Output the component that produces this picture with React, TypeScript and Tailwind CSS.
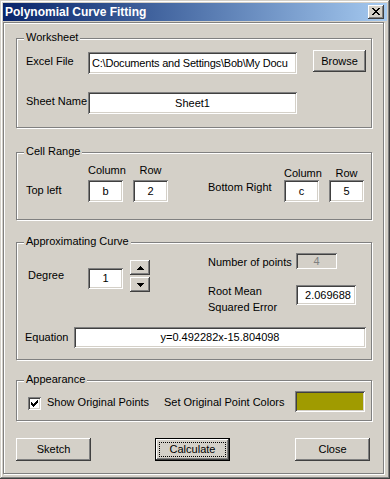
import React from "react";

const SUNKEN =
  "shadow-[inset_1px_1px_#808080,inset_-1px_-1px_#ffffff,inset_2px_2px_#404040,inset_-2px_-2px_#d4d0c8]";
const RAISED =
  "shadow-[inset_-1px_-1px_#404040,inset_1px_1px_#ffffff,inset_-2px_-2px_#808080,inset_2px_2px_#d4d0c8]";
const ETCHED =
  "border border-[#808080] shadow-[1px_1px_0_#ffffff,inset_1px_1px_0_#ffffff]";

function Pixels({ rows, color = "#000" }: { rows: string[]; color?: string }) {
  const w = rows[0].length;
  const h = rows.length;
  return (
    <svg width={w} height={h} viewBox={`0 0 ${w} ${h}`} shapeRendering="crispEdges" className="block">
      {rows.flatMap((r, y) =>
        r.split("").map((c, x) =>
          c === "#" ? <rect key={`${x}-${y}`} x={x} y={y} width={1} height={1} fill={color} /> : null
        )
      )}
    </svg>
  );
}

const CLOSE_X = ["##....##", ".##..##.", "..####..", "...##...", "..####..", ".##..##.", "##....##"];
const UP = ["...#...", "..###..", ".#####.", "#######"];
const DOWN = ["#######", ".#####.", "..###..", "...#..."];
const CHECK = ["......#", ".....##", "#...###", "##.###.", "#####..", ".###...", "..#...."];

function Group({ label, className = "", children }: { label: string; className?: string; children?: React.ReactNode }) {
  return (
    <div className={`relative ${ETCHED} ${className}`}>
      <span className="absolute left-[7px] top-[-8px] bg-[#d4d0c8] px-[2px] leading-[13px] whitespace-nowrap">
        {label}
      </span>
      {children}
    </div>
  );
}

function Edit({
  className = "",
  children,
  disabled = false,
}: {
  className?: string;
  children?: React.ReactNode;
  disabled?: boolean;
}) {
  return (
    <div
      className={`${SUNKEN} ${
        disabled ? "bg-[#d4d0c8] text-[#808080]" : "bg-white text-black"
      } flex shrink-0 items-center overflow-hidden whitespace-nowrap ${className}`}
    >
      {children}
    </div>
  );
}

function Btn({ className = "", children }: { className?: string; children?: React.ReactNode }) {
  return (
    <div className={`${RAISED} flex shrink-0 items-center justify-center bg-[#d4d0c8] ${className}`}>
      {children}
    </div>
  );
}

export default function App() {
  return (
    <div className="w-[390px] h-[479px] overflow-hidden bg-[#d4d0c8] p-[3px] shadow-[inset_-1px_-1px_#404040,inset_1px_1px_#d4d0c8,inset_-2px_-2px_#808080,inset_2px_2px_#ffffff] font-['Liberation_Sans',Arial,sans-serif] text-[11px] leading-[13px] text-black">
      {/* Title bar */}
      <div className="flex h-[18px] items-center justify-between bg-linear-to-r from-[#0a246a] to-[#a6caf0] pl-[2px] pr-[3px]">
        <span className="text-[12px] font-bold text-white">Polynomial Curve Fitting</span>
        <div className={`${RAISED} flex h-[14px] w-[16px] items-start justify-start bg-[#d4d0c8] pl-[4px] pt-[3px]`}>
          <Pixels rows={CLOSE_X} />
        </div>
      </div>

      {/* Client area */}
      <div className={`mt-[1px] h-[452px] w-[381px] ${ETCHED} pl-[12px] pt-[15px]`}>
        {/* Worksheet */}
        <Group label="Worksheet" className="h-[90px] w-[356px]">
          <div className="mt-[11px] flex items-start pl-[9px]">
            <div className="mt-[5px] w-[62px]">Excel File</div>
            <Edit className="mt-[2px] h-[22px] w-[209px] justify-start pl-[4px]">
              <span className="tracking-[-0.2px]">C:\Documents and Settings\Bob\My Docu</span>
            </Edit>
            <Btn className="ml-[16px] h-[22px] w-[53px]">Browse</Btn>
          </div>
          <div className="mt-[18px] flex items-start pl-[9px]">
            <div className="mt-[3px] w-[62px]">Sheet Name</div>
            <Edit className="h-[22px] w-[209px] justify-center">Sheet1</Edit>
          </div>
        </Group>

        {/* Cell Range */}
        <Group label="Cell Range" className="mt-[24px] h-[68px] w-[356px]">
          <div className="flex items-start">
            <div className="pl-[9px]">
              <div className="mt-[11px] flex pl-[62px]">
                <div className="w-[35px] text-center">Column</div>
                <div className="ml-[10px] w-[35px] text-center">Row</div>
              </div>
              <div className="mt-[3px] flex items-start">
                <div className="mt-[4px] w-[62px]">Top left</div>
                <Edit className="h-[22px] w-[35px] justify-center">b</Edit>
                <Edit className="ml-[10px] h-[22px] w-[35px] justify-center">2</Edit>
              </div>
            </div>
            <div className="ml-[40px]">
              <div className="mt-[14px] flex pl-[76px]">
                <div className="w-[35px] text-center">Column</div>
                <div className="ml-[10px] w-[35px] text-center">Row</div>
              </div>
              <div className="flex items-start">
                <div className="mt-[1px] w-[76px] whitespace-nowrap">Bottom Right</div>
                <Edit className="h-[22px] w-[35px] justify-center">c</Edit>
                <Edit className="ml-[10px] h-[22px] w-[35px] justify-center">5</Edit>
              </div>
            </div>
          </div>
        </Group>

        {/* Approximating Curve */}
        <Group label="Approximating Curve" className="mt-[22px] h-[118px] w-[356px]">
          <div className="flex h-[84px] items-start">
            <div className="w-[191px] pl-[11px]">
              <div className="mt-[17px] flex items-start">
                <div className="mt-[9px] w-[60px]">Degree</div>
                <Edit className="mt-[8px] h-[21px] w-[35px] justify-center">1</Edit>
                <div className="ml-[7px] flex flex-col">
                  <Btn className="h-[15px] w-[20px]">
                    <Pixels rows={UP} />
                  </Btn>
                  <Btn className="mt-[2px] h-[15px] w-[20px]">
                    <Pixels rows={DOWN} />
                  </Btn>
                </div>
              </div>
            </div>
            <div>
              <div className="mt-[10px] flex items-start">
                <div className="mt-[3px] w-[88px] whitespace-nowrap">Number of points</div>
                <Edit disabled className="h-[16px] w-[41px] justify-center">
                  4
                </Edit>
              </div>
              <div className="mt-[14px] flex items-start">
                <div className="w-[88px] leading-[16px]">
                  Root Mean
                  <br />
                  Squared Error
                </div>
                <Edit className="mt-[2px] h-[20px] w-[60px] justify-center pl-[4px]">2.069688</Edit>
              </div>
            </div>
          </div>
          <div className="flex items-start pl-[8px]">
            <div className="mt-[4px] w-[49px]">Equation</div>
            <Edit className="h-[21px] w-[292px] justify-center">y=0.492282x-15.804098</Edit>
          </div>
        </Group>

        {/* Appearance */}
        <Group label="Appearance" className="mt-[20px] h-[41px] w-[356px]">
          <div className="mt-[10px] flex items-start pl-[11px]">
            <div className={`${SUNKEN} mt-[6px] flex h-[13px] w-[13px] shrink-0 items-center justify-center bg-white`}>
              <Pixels rows={CHECK} />
            </div>
            <div className="ml-[6px] mt-[5px] w-[117px] whitespace-nowrap">Show Original Points</div>
            <div className="mt-[5px] w-[131px] whitespace-nowrap">Set Original Point Colors</div>
            <div className={`${SUNKEN} h-[21px] w-[70px] shrink-0 bg-[#a09b00]`} />
          </div>
        </Group>

        {/* Buttons */}
        <div className="mt-[17px] flex items-start">
          <Btn className="h-[23px] w-[75px]">Sketch</Btn>
          <div className={`relative ml-[64px] flex h-[23px] w-[75px] items-center justify-center border border-black bg-[#d4d0c8] ${RAISED}`}>
            <div className="pointer-events-none absolute inset-[3px] border border-dotted border-black" />
            Calculate
          </div>
          <Btn className="ml-[65px] h-[23px] w-[75px]">Close</Btn>
        </div>
      </div>
    </div>
  );
}
